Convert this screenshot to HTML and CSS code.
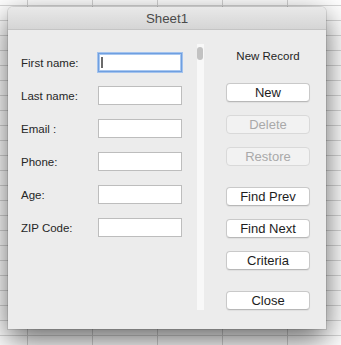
FILE: index.html
```html
<!DOCTYPE html>
<html>
<head>
  <meta charset="utf-8" />
  <title>Sheet1</title>
  <link rel="stylesheet" href="styles.css">
</head>
<body>
<div class="dialog">
  <div class="titlebar">Sheet1</div>
  <div class="content">
    <div class="form">
      <div class="row">
        <div class="label">First name:</div>
        <div class="field focused"><span class="caret"></span></div>
      </div>
      <div class="row">
        <div class="label">Last name:</div>
        <div class="field"></div>
      </div>
      <div class="row">
        <div class="label">Email :</div>
        <div class="field"></div>
      </div>
      <div class="row">
        <div class="label">Phone:</div>
        <div class="field"></div>
      </div>
      <div class="row">
        <div class="label">Age:</div>
        <div class="field"></div>
      </div>
      <div class="row">
        <div class="label">ZIP Code:</div>
        <div class="field"></div>
      </div>
    </div>
    <div class="scroll-track">
      <div class="scroll-thumb"></div>
    </div>
    <div class="actions">
      <div class="record-label">New Record</div>
      <div class="button-group">
        <div class="btn">New</div>
        <div class="btn disabled">Delete</div>
        <div class="btn disabled">Restore</div>
      </div>
      <div class="button-group">
        <div class="btn">Find Prev</div>
        <div class="btn">Find Next</div>
        <div class="btn">Criteria</div>
      </div>
      <div class="btn">Close</div>
    </div>
  </div>
</div>
</body>
</html>
```

FILE: styles.css
```css
body {
  margin: 0;
  padding: 7px 0 0 8px;
  width: 341px;
  height: 345px;
  box-sizing: border-box;
  overflow: hidden;
  font-family: "Liberation Sans", Arial, sans-serif;
  background-color: #ffffff;
  background-image:
    repeating-linear-gradient(to right, transparent 0, transparent 27px, #d2d2d2 27px, #d2d2d2 28px, transparent 28px, transparent 65px),
    repeating-linear-gradient(to bottom, transparent 0, transparent 5px, #d6d6d6 5px, #d6d6d6 6px, transparent 6px, transparent 15px);
  background-size: 65px 100%, 100% 15px;
}
.dialog {
  width: 318px;
  height: 322px;
  background: #ececec;
  border-radius: 5px 5px 0 0;
  box-shadow: 0 0 0 1px rgba(0,0,0,0.1), 0 10px 30px rgba(0,0,0,0.62);
  display: flex;
  flex-direction: column;
  overflow: hidden;
}
.titlebar {
  height: 22px;
  flex-shrink: 0;
  background: linear-gradient(#e9e9e9, #d5d5d5);
  border-bottom: 1px solid #c4c4c4;
  text-align: center;
  font-size: 13.3px;
  line-height: 24px;
  color: #4a4a4a;
}
.content {
  flex-grow: 1;
  display: flex;
}
.form {
  width: 176px;
  padding: 23px 0 0 13px;
  display: flex;
  flex-direction: column;
  gap: 14px;
}
.row {
  display: flex;
  align-items: center;
  height: 19px;
}
.label {
  width: 77px;
  font-size: 11.5px;
  color: #262626;
}
.field {
  width: 84px;
  height: 19px;
  box-sizing: border-box;
  background: #ffffff;
  border: 1px solid #bdbdbd;
  display: flex;
  align-items: center;
  padding-left: 2px;
}
.field.focused {
  border-color: #6f9fe0;
  box-shadow: inset 0 0 0 1px #a8c7f0, 0 0 0 1px #a3c3ee;
}
.caret {
  width: 2px;
  height: 11px;
  background: #6a6a6a;
}
.scroll-track {
  width: 7px;
  height: 266px;
  margin-top: 14px;
  background: #f8f8f8;
  padding-top: 3px;
  box-sizing: border-box;
}
.scroll-thumb {
  width: 6px;
  height: 13px;
  border-radius: 3px;
  background: #c2c2c2;
}
.actions {
  margin-left: 22px;
  width: 84px;
  padding-top: 19px;
  display: flex;
  flex-direction: column;
  gap: 21px;
}
.record-label {
  text-align: center;
  font-size: 11.5px;
  line-height: 14px;
  color: #1f1f1f;
  margin-bottom: -1px;
}
.button-group {
  display: flex;
  flex-direction: column;
  gap: 13px;
}
.btn {
  height: 19px;
  box-sizing: border-box;
  background: #ffffff;
  border: 1px solid #c9c9c9;
  border-bottom-color: #b8b8b8;
  border-radius: 4px;
  box-shadow: 0 1px 1px rgba(0,0,0,0.06);
  text-align: center;
  font-size: 13px;
  line-height: 17px;
  color: #1d1d1d;
}
.btn.disabled {
  background: #f2f2f2;
  border-color: #d9d9d9;
  box-shadow: none;
  color: #a9a9a9;
}
```
